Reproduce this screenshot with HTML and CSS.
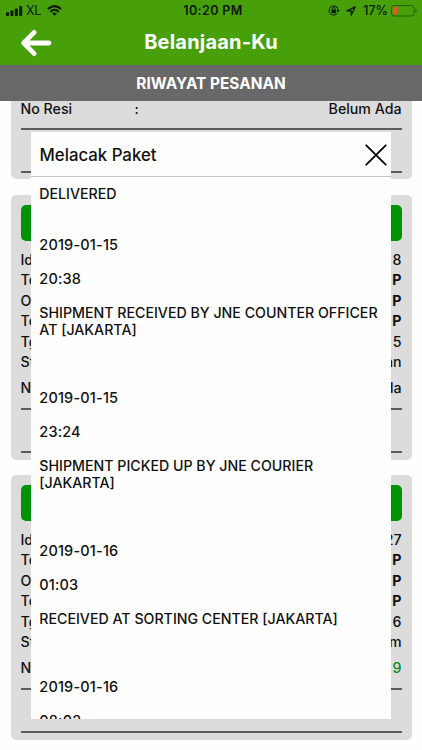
FILE: index.html
```
<!DOCTYPE html>
<html lang="id">
<head>
<meta charset="utf-8">
<title>Belanjaan-Ku</title>
<link rel="stylesheet" href="styles.css">
</head>
<body>
<div class="app">
  <header class="top">
    <div class="status">
      <div class="side">
        <svg class="signal" width="17" height="10" viewBox="0 0 17 10"><rect x="0" y="6.3" width="3" height="3.7" rx=".7"/><rect x="4.4" y="4.5" width="3" height="5.5" rx=".7"/><rect x="8.8" y="2.5" width="3" height="7.5" rx=".7"/><rect x="13.2" y="0" width="3" height="10" rx=".7"/></svg>
        <span class="carrier">XL</span>
        <svg class="wifi" width="15" height="11" viewBox="0 0 15 11"><g fill="none" stroke="#0b1a02" stroke-width="2"><path d="M.9 4.1Q7.5-1.8 14.1 4.1"/><path d="M3.3 6.7Q7.5 2.9 11.7 6.7"/></g><path d="M7.5 10.7 5 8.3Q7.5 6.5 10 8.3Z"/></svg>
      </div>
      <span class="time">10:20 PM</span>
      <div class="side right">
        <svg width="12" height="11" viewBox="0 0 12 11"><g fill="none" stroke="#0b1a02" stroke-width="1"><path d="M9.4 2.8A4.6 4.6 0 1 0 9.4 8.2"/><path d="M8.4 1.8A4.6 4.6 0 0 1 10 5.8"/><path d="M4.3 5V3.8a1.4 1.4 0 0 1 2.8 0V5"/></g><rect x="3.4" y="4.8" width="4.6" height="3.4" rx=".4"/><path d="M8.3 5.2h3.5L10 7.5Z"/></svg>
        <svg class="arrow" width="10" height="10" viewBox="0 0 10 10"><path d="M.9 4.9 9.2.8 5.2 9.1V4.9Z" fill="none" stroke="#0b1a02" stroke-width="1.3" stroke-linejoin="round"/></svg>
        <span class="percent">17%</span>
        <svg class="battery" width="27" height="12" viewBox="0 0 27 12"><rect x=".5" y=".5" width="22.5" height="10.5" rx="2.5" fill="none" stroke="#286104"/><rect x="2" y="2" width="4.3" height="7.5" rx=".8" fill="#f64b2b"/><path d="M24.3 4v4q1.7-.5 1.7-2t-1.7-2Z" fill="#286104"/></svg>
      </div>
    </div>
    <div class="nav">
      <svg class="back" width="32" height="28" viewBox="0 0 32 28"><path d="M14.2 3.4 3.6 14 14.2 24.6M4 14H29" fill="none" stroke="#fff" stroke-width="4.8" stroke-linecap="round" stroke-linejoin="round"/></svg>
      <h1>Belanjaan-Ku</h1>
    </div>
  </header>
  <div class="section">RIWAYAT PESANAN</div>
  <main class="orders">
    <article class="card first">
      <div class="row resi"><span class="label">No Resi</span><span>:</span><span class="value">Belum Ada</span></div>
      <div class="action"></div>
    </article>
    <article class="card">
      <div class="bar"></div>
      <div class="row"><span>Id</span><span class="value">8</span></div>
      <div class="row"><span>To</span><b class="value">P</b></div>
      <div class="row"><span>O</span><b class="value">P</b></div>
      <div class="row"><span>To</span><b class="value">P</b></div>
      <div class="row"><span>Tg</span><span class="value">5</span></div>
      <div class="row"><span>St</span><span class="value">an</span></div>
      <div class="row resi"><span>N</span><span class="value">da</span></div>
      <div class="action"></div>
    </article>
    <article class="card">
      <div class="bar"></div>
      <div class="row"><span>Id</span><span class="value">27</span></div>
      <div class="row"><span>To</span><b class="value">P</b></div>
      <div class="row"><span>O</span><b class="value">P</b></div>
      <div class="row"><span>To</span><b class="value">P</b></div>
      <div class="row"><span>Tg</span><span class="value">6</span></div>
      <div class="row"><span>St</span><span class="value">m</span></div>
      <div class="row resi"><span>N</span><span class="value tracked">9</span></div>
      <div class="action"></div>
    </article>
  </main>
  <section class="modal">
    <div class="modal-head">
      <h2>Melacak Paket</h2>
      <svg width="22" height="22" viewBox="0 0 22 22"><path d="M1.3 1.3 20.7 20.7M20.7 1.3 1.3 20.7" fill="none" stroke="#000" stroke-width="1.8" stroke-linecap="round"/></svg>
    </div>
    <div class="log">
      <p class="state">DELIVERED</p>
      <div class="event"><p class="when">2019-01-15</p><p class="when">20:38</p><p>SHIPMENT RECEIVED BY JNE COUNTER OFFICER<br>AT [JAKARTA]</p></div>
      <div class="event"><p class="when">2019-01-15</p><p class="when">23:24</p><p>SHIPMENT PICKED UP BY JNE COURIER<br>[JAKARTA]</p></div>
      <div class="event"><p class="when">2019-01-16</p><p class="when">01:03</p><p>RECEIVED AT SORTING CENTER [JAKARTA]</p></div>
      <div class="event"><p class="when">2019-01-16</p><p class="when">08:02</p></div>
    </div>
  </section>
</div>
</body>
</html>
```
FILE: styles.css
```
* { box-sizing: border-box; }
body { margin: 0; background: #fefefe; color: #111; font-family: Inter, "Liberation Sans", sans-serif; }
h1, h2, p { margin: 0; }
svg { display: block; flex: none; }
.app { position: relative; width: 422px; height: 750px; overflow: hidden; }
.top { height: 65px; background: #479f0a; }
.status { display: grid; grid-template-columns: 1fr auto 1fr; height: 21px; padding: 0 4px 0 6px; align-items: center; color: #0b1a02; fill: #0b1a02; font-size: 12.5px; line-height: 21px; }
.side { display: flex; align-items: center; }
.right { justify-content: flex-end; }
.carrier { margin-left: 3px; letter-spacing: -.3px; }
.wifi { margin-left: 6px; }
.time { margin-left: 2px; font-weight: 600; letter-spacing: .4px; }
.arrow { margin-left: 6px; }
.percent { margin-left: 7px; font-weight: 500; }
.battery { margin-left: 3px; }
.nav { display: grid; grid-template-columns: 32px 1fr 32px; height: 44px; padding: 0 20px; align-items: center; }
.nav h1 { text-align: center; color: #fff; font-size: 20px; letter-spacing: .2px; line-height: 24px; font-weight: 700; padding-bottom: 2px; }
.section { height: 36px; background: #686868; color: #fff; text-align: center; font-size: 15.4px; line-height: 37px; font-weight: 700; }
.orders { padding: 0 10.5px; }
.card { height: 265px; margin-bottom: 15px; padding: 10px 10px 0; border-radius: 5px; background: #dcdcdc; }
.first { height: 78px; margin-bottom: 16px; padding-top: 0; border-radius: 0 0 5px 5px; }
.bar { height: 36px; margin-bottom: 8.5px; border-radius: 5px; background: #009404; }
.row { display: flex; height: 20.5px; align-items: center; font-size: 14.2px; line-height: 20.5px; font-weight: 550; }
.label { width: 114px; }
.value { margin-left: auto; }
.row b { font-weight: 650; }
.resi { height: 37px; border-bottom: 2px solid #5c5c5c; padding-bottom: 3px; }
.first .resi { height: 29px; padding-bottom: 12px; line-height: 15px; align-items: flex-start; }
.tracked { color: #078c10; }
.action { height: 43px; border-bottom: 2px solid #5c5c5c; }
.modal { position: absolute; left: 31px; top: 132px; width: 360px; height: 587px; background: #fefefe; overflow: hidden; }
.modal-head { display: flex; height: 45px; padding: 2px 4px 0 8.5px; align-items: center; justify-content: space-between; border-bottom: 1.5px solid #c5c5c5; }
.modal-head h2 { font-size: 16.8px; line-height: 22px; font-weight: 550; }
.log { padding: 7.5px 8px 0 8.3px; font-size: 14.2px; line-height: 17.03px; font-weight: 550; }
.state { margin-bottom: 34.06px; }
.event { display: flex; flex-direction: column; gap: 17.03px; margin-bottom: 51.09px; white-space: nowrap; }
.when { font-size: 14.5px; letter-spacing: .17px; }
```
